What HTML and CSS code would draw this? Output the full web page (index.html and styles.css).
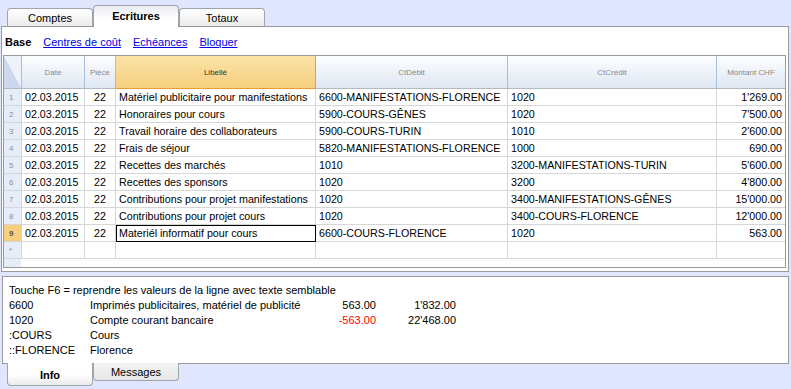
FILE: index.html
```html
<!DOCTYPE html>
<html lang="fr">
<head>
  <meta charset="UTF-8" />
  <title>Ecritures</title>
  <link rel="stylesheet" href="styles.css">
</head>
<body>
  <div class="tabs top">
    <div class="tab">Comptes</div>
    <div class="tab active">Ecritures</div>
    <div class="tab">Totaux</div>
  </div>

  <div class="panel">
    <div class="views">
      <b>Base</b>
      <a href="#">Centres de coût</a>
      <a href="#">Echéances</a>
      <a href="#">Bloquer</a>
    </div>

    <div class="grid">
      <div class="row head">
        <div class="cell num corner"></div>
        <div class="cell">Date</div>
        <div class="cell">Pièce</div>
        <div class="cell sel">Libellé</div>
        <div class="cell">CtDébit</div>
        <div class="cell">CtCrédit</div>
        <div class="cell">Montant CHF</div>
      </div>

      <div class="row">
        <div class="cell num">1</div><div class="cell">02.03.2015</div><div class="cell c">22</div>
        <div class="cell">Matériel publicitaire pour manifestations</div>
        <div class="cell">6600-MANIFESTATIONS-FLORENCE</div><div class="cell">1020</div><div class="cell r">1'269.00</div>
      </div>
      <div class="row">
        <div class="cell num">2</div><div class="cell">02.03.2015</div><div class="cell c">22</div>
        <div class="cell">Honoraires pour cours</div>
        <div class="cell">5900-COURS-GÊNES</div><div class="cell">1020</div><div class="cell r">7'500.00</div>
      </div>
      <div class="row">
        <div class="cell num">3</div><div class="cell">02.03.2015</div><div class="cell c">22</div>
        <div class="cell">Travail horaire des collaborateurs</div>
        <div class="cell">5900-COURS-TURIN</div><div class="cell">1010</div><div class="cell r">2'600.00</div>
      </div>
      <div class="row">
        <div class="cell num">4</div><div class="cell">02.03.2015</div><div class="cell c">22</div>
        <div class="cell">Frais de séjour</div>
        <div class="cell">5820-MANIFESTATIONS-FLORENCE</div><div class="cell">1000</div><div class="cell r">690.00</div>
      </div>
      <div class="row">
        <div class="cell num">5</div><div class="cell">02.03.2015</div><div class="cell c">22</div>
        <div class="cell">Recettes des marchés</div>
        <div class="cell">1010</div><div class="cell">3200-MANIFESTATIONS-TURIN</div><div class="cell r">5'600.00</div>
      </div>
      <div class="row">
        <div class="cell num">6</div><div class="cell">02.03.2015</div><div class="cell c">22</div>
        <div class="cell">Recettes des sponsors</div>
        <div class="cell">1020</div><div class="cell">3200</div><div class="cell r">4'800.00</div>
      </div>
      <div class="row">
        <div class="cell num">7</div><div class="cell">02.03.2015</div><div class="cell c">22</div>
        <div class="cell">Contributions pour projet manifestations</div>
        <div class="cell">1020</div><div class="cell">3400-MANIFESTATIONS-GÊNES</div><div class="cell r">15'000.00</div>
      </div>
      <div class="row">
        <div class="cell num">8</div><div class="cell">02.03.2015</div><div class="cell c">22</div>
        <div class="cell">Contributions pour projet cours</div>
        <div class="cell">1020</div><div class="cell">3400-COURS-FLORENCE</div><div class="cell r">12'000.00</div>
      </div>
      <div class="row current">
        <div class="cell num">9</div><div class="cell">02.03.2015</div><div class="cell c">22</div>
        <div class="cell focus">Materiél informatif pour cours</div>
        <div class="cell">6600-COURS-FLORENCE</div><div class="cell">1020</div><div class="cell r">563.00</div>
      </div>
      <div class="row">
        <div class="cell num">*</div><div class="cell"></div><div class="cell"></div>
        <div class="cell"></div><div class="cell"></div><div class="cell"></div><div class="cell"></div>
      </div>

      <div class="filler"><div class="num-fill"></div></div>
    </div>
  </div>

  <div class="info">
    <div class="hint">Touche F6 = reprendre les valeurs de la ligne avec texte semblable</div>
    <div class="line"><span>6600</span><span>Imprimés publicitaires, matériel de publicité</span><span class="amt">563.00</span><span class="amt">1'832.00</span></div>
    <div class="line"><span>1020</span><span>Compte courant bancaire</span><span class="amt neg">-563.00</span><span class="amt">22'468.00</span></div>
    <div class="line"><span>:COURS</span><span>Cours</span><span></span><span></span></div>
    <div class="line"><span>::FLORENCE</span><span>Florence</span><span></span><span></span></div>
  </div>

  <div class="tabs bottom">
    <div class="tab active">Info</div>
    <div class="tab">Messages</div>
  </div>
</body>
</html>
```

FILE: styles.css
```css
* {
  box-sizing: border-box;
}

body {
  margin: 0;
  width: 791px;
  height: 389px;
  overflow: hidden;
  background: #dfe6fd;
  font-family: "Liberation Sans", Arial, sans-serif;
  font-size: 11px;
  color: #000;
}

/* onglets */
.tabs {
  display: flex;
  padding-left: 7px;
  position: relative;
  z-index: 1;
}

.tabs.top {
  height: 27px;
  align-items: flex-end;
  margin-bottom: -1px;
}

.tabs .tab {
  width: 86px;
  display: flex;
  align-items: center;
  justify-content: center;
  color: #000;
}

.tabs.top .tab {
  height: 18px;
  margin-bottom: 1px;
  border: 1px solid #9ea4ab;
  border-bottom: none;
  border-radius: 4px 4px 0 0;
  background: linear-gradient(#ffffff, #ebebeb);
  padding-top: 1px;
}

.tabs.top .tab.active {
  height: 22px;
  margin-bottom: 0;
  font-weight: bold;
  background: linear-gradient(#e9ecf2, #ffffff 60%);
  padding-top: 0;
  padding-bottom: 2px;
}

.tabs.bottom {
  align-items: flex-start;
  margin-top: -1px;
}

.tabs.bottom .tab {
  height: 18px;
  border: 1px solid #9ea4ab;
  border-top: none;
  border-radius: 0 0 4px 4px;
  background: linear-gradient(#f4f4f4, #e6e6e6);
}

.tabs.bottom .tab.active {
  height: 23px;
  font-weight: bold;
  background: linear-gradient(#ffffff 50%, #ebebeb);
  padding-top: 2px;
}

/* panneau principal */
.panel {
  margin: 0 2px 0 1px;
  border: 1px solid #9a9a9a;
  background: #fff;
}

.views {
  height: 28px;
  display: flex;
  gap: 12px;
  padding: 8px 0 0 3px;
  line-height: 14px;
}

.views a {
  color: #0000e6;
}

.grid {
  margin: 0 2px 3px 1px;
  height: 213px;
  border: 1px solid #9a9a9a;
  display: flex;
  flex-direction: column;
}

.row {
  display: grid;
  grid-template-columns: 18px 63px 31px 200px 192px 209px 68px;
  height: 17px;
}

.cell {
  border-right: 1px solid #d6d6d6;
  border-bottom: 1px solid #d6d6d6;
  padding: 0 3px;
  font-size: 10.7px;
  line-height: 16px;
  white-space: nowrap;
  overflow: hidden;
}

.cell:last-child {
  border-right: none;
}

.cell.c {
  text-align: center;
}

.cell.r {
  text-align: right;
}

.cell.num {
  background: #e6edf9;
  color: #8d8d8d;
  font-size: 8px;
  padding-left: 5px;
  padding-top: 1px;
}

.row.current .cell.num {
  background: #f8cf7c;
  color: #555;
  font-weight: bold;
}

.cell.focus {
  outline: 1px solid #000;
  outline-offset: -1px;
}

.row.head {
  height: 33px;
}

.row.head .cell {
  background: linear-gradient(#fdfeff, #dfe6f2);
  border-right-color: #a9bed8;
  border-bottom-color: #b4b9c2;
  color: #8a8a8a;
  font-size: 8px;
  display: flex;
  align-items: center;
  justify-content: center;
  padding-top: 2px;
}

.row.head .cell.sel {
  background: linear-gradient(#fbe2a6, #f6cf7f);
  border-right-color: #f19a35;
  border-bottom-color: #f19a35;
  color: #333;
}

.row.head .cell.corner {
  background: linear-gradient(to top right, #cdd8ef 50%, #eef2fa 50%);
}

.filler {
  flex: 1;
}

.num-fill {
  width: 17px;
  height: 100%;
  background: #e6edf9;
}

/* panneau info */
.info {
  margin: 4px 2px 0 2px;
  height: 88px;
  border: 1px solid #9a9a9a;
  background: #fff;
  padding: 6px 0 0 6px;
  line-height: 15px;
}

.info .line {
  display: grid;
  grid-template-columns: 81px 226px 60px 80px;
}

.info .amt {
  text-align: right;
}

.info .neg {
  color: #f00;
}
```
